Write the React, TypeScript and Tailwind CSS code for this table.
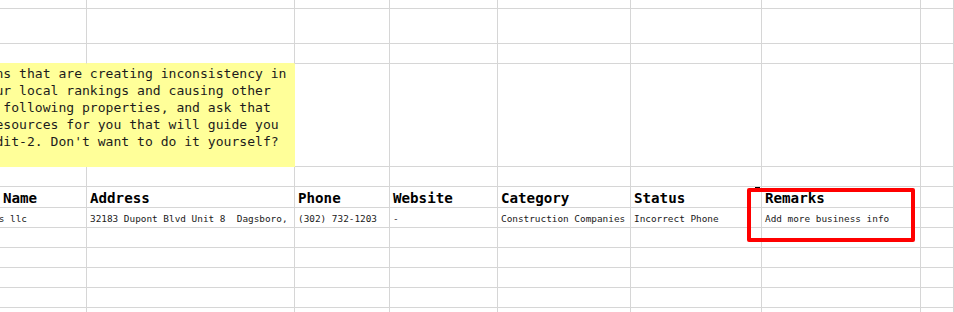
import { clsx } from "clsx";
import type { ReactNode } from "react";

// column widths include the 1px right grid line
const cols = [
  "w-[87px]",
  "w-[208px]",
  "w-[95px]",
  "w-[108px]",
  "w-[133px]",
  "w-[131px]",
  "w-[159px]",
  "flex-1",
];

const headers = ["Name", "Address", "Phone", "Website", "Category", "Status", "Remarks", ""];
const record = [
  "s llc",
  "32183 Dupont Blvd Unit 8  Dagsboro,",
  "(302) 732-1203",
  "-",
  "Construction Companies",
  "Incorrect Phone",
  "Add more business info",
  "",
];

const note = [
  "ns that are creating inconsistency in",
  "ur local rankings and causing other",
  " following properties, and ask that",
  "esources for you that will guide you",
  "dit-2. Don't want to do it yourself?",
];

function Cell({ w, className, children }: { w: string; className?: string; children?: ReactNode }) {
  return (
    <div
      className={clsx(
        "shrink-0 overflow-hidden whitespace-pre border-b border-r border-[#d6d6d6]",
        w,
        className
      )}
    >
      {children}
    </div>
  );
}

function EmptyRow({ h, yellowBottom }: { h: string; yellowBottom?: boolean }) {
  return (
    <div className={clsx("flex", h)}>
      {cols.map((w, i) => (
        <Cell key={i} w={w} className={yellowBottom && i < 2 ? "border-b-[#ffff99]" : undefined} />
      ))}
    </div>
  );
}

export default function App() {
  return (
    <div className="relative h-[312px] w-full overflow-hidden bg-white font-['DejaVu_Sans_Mono','Liberation_Mono',monospace]">
      <EmptyRow h="h-[9px]" />
      <EmptyRow h="h-[35px]" />
      <EmptyRow h="h-[20px]" yellowBottom />

      {/* merged note cell */}
      <div className="flex h-[103px]">
        <div className="w-[295px] shrink-0 overflow-hidden border-b border-r border-[#ffff99] bg-[#ffff99] pt-px">
          <div className="-ml-[4.5px] whitespace-pre text-[13.07px] leading-[17px] text-[#1c1c1c]">
            {note.map((l) => (
              <div key={l}>{l}</div>
            ))}
          </div>
        </div>
        {cols.slice(2).map((w, i) => (
          <Cell key={i} w={w} />
        ))}
      </div>

      <EmptyRow h="h-[20px]" />

      {/* header */}
      <div className="flex h-[21px]">
        {cols.map((w, i) => (
          <Cell key={i} w={w} className="pl-[3px] pt-[2px] text-[14.2px] font-bold leading-[19px] text-black">
            {headers[i]}
          </Cell>
        ))}
      </div>

      {/* record */}
      <div className="flex h-[20px]">
        {cols.map((w, i) => (
          <Cell
            key={i}
            w={w}
            className={clsx(
              "pt-[2px] text-[9.4px] leading-[17px] text-[#1a1a1a]",
              i === 0 ? "-indent-[1.3px]" : "pl-[3px]"
            )}
          >
            {record[i]}
          </Cell>
        ))}
      </div>

      <EmptyRow h="h-[20px]" />
      <EmptyRow h="h-[20px]" />
      <EmptyRow h="h-[20px]" />
      <EmptyRow h="h-[20px]" />
      <EmptyRow h="h-[20px]" />

      {/* selection tick + annotation box */}
      <div className="absolute left-[755px] top-[187px] h-[2px] w-[5px] bg-black" />
      <div className="absolute left-[747px] top-[188px] h-[54px] w-[168px] rounded-[2px] border-4 border-[#ff0000]" />
    </div>
  );
}
